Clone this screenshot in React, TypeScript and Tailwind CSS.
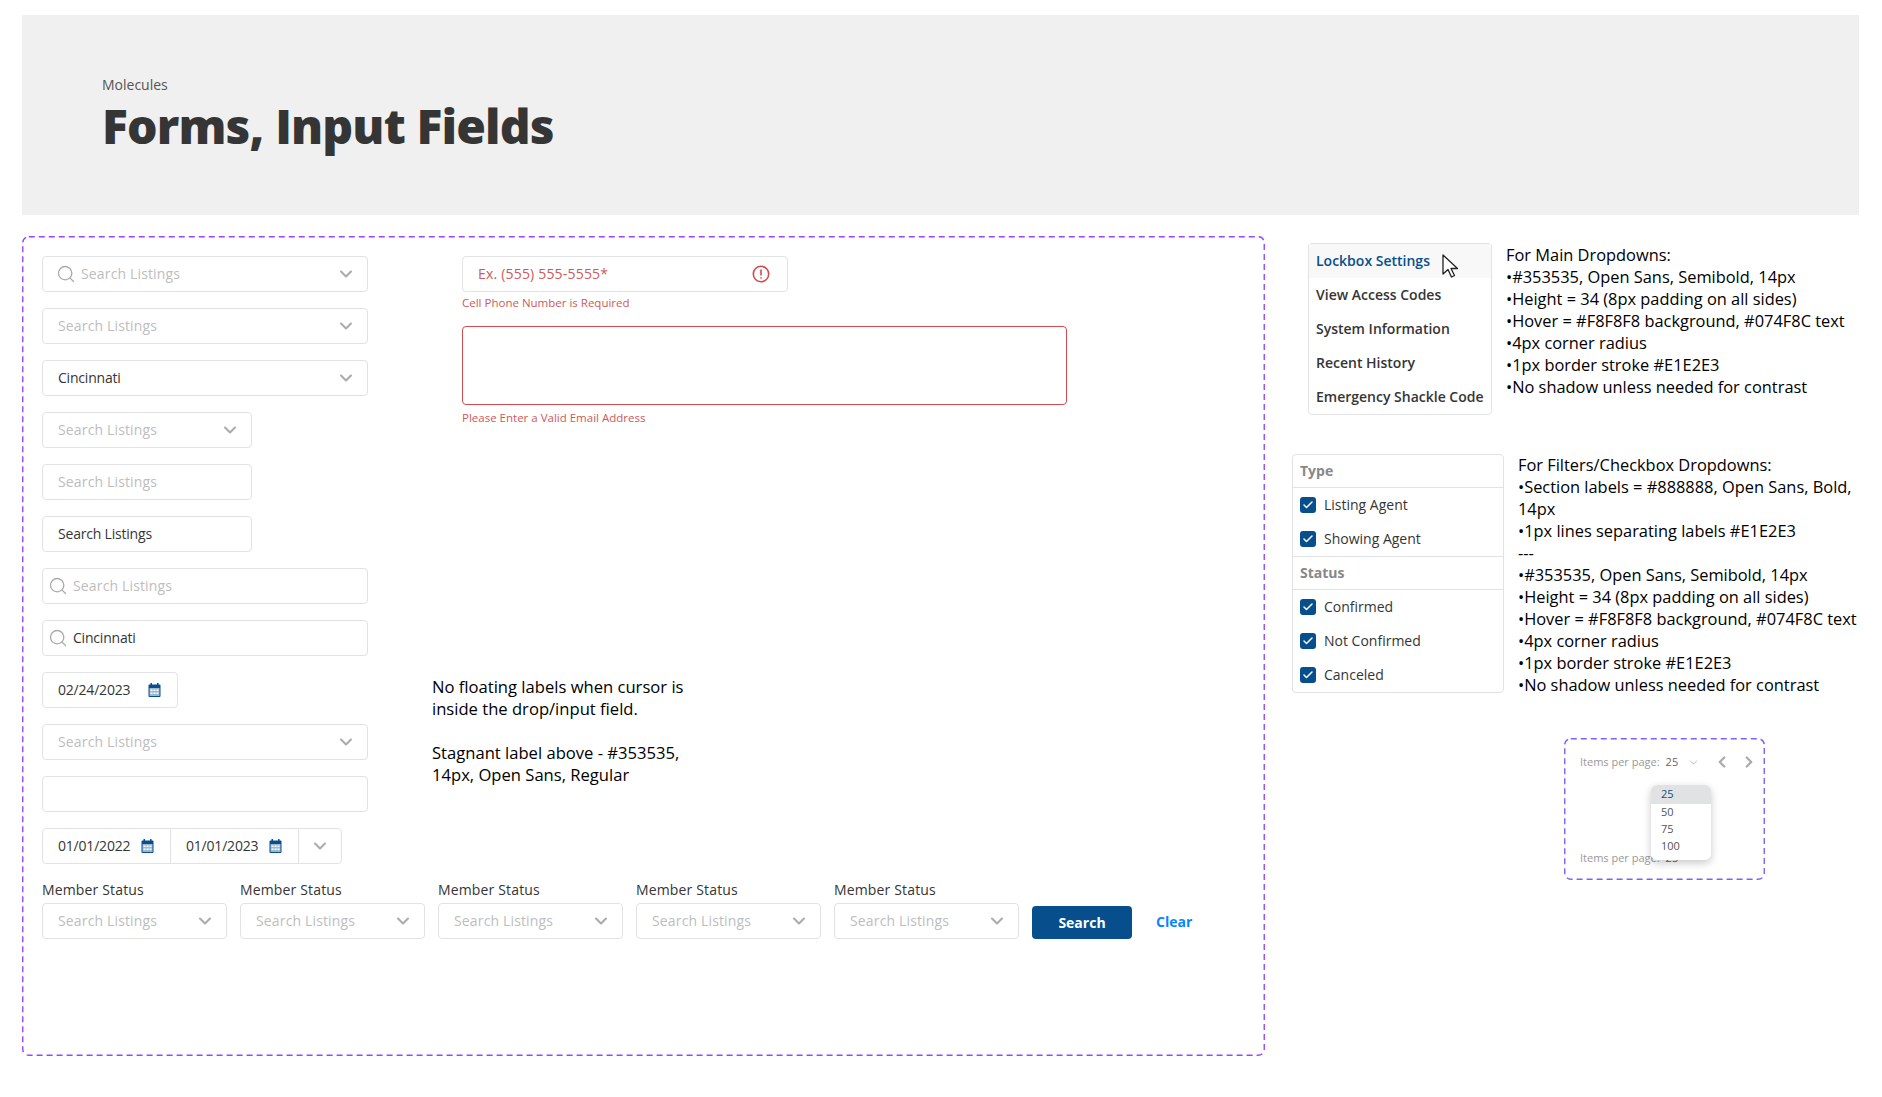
import type { ReactNode } from 'react'
import { ChevronDown, ChevronLeft, ChevronRight, Search, Check } from 'lucide-react'

const font = { fontFamily: '"Open Sans", sans-serif' }

const fieldClass = 'flex h-9 items-center rounded-[4px] border border-[#E1E2E3] bg-white text-sm'

function Chevron({ className = '' }: { className?: string }) {
  return <ChevronDown size={20} strokeWidth={2.5} className={`shrink-0 text-[#ABABAB] ${className}`} />
}

function SearchIcon() {
  return <Search size={20} strokeWidth={1.6} className="shrink-0 text-[#ABABAB]" />
}

// figma style long dashes, css dashed borders come out too short
function DashedFrame({ w, h, color }: { w: number; h: number; color: string }) {
  return (
    <svg width={w} height={h} className="pointer-events-none absolute left-0 top-0" fill="none">
      <rect x="0.75" y="0.75" width={w - 1.5} height={h - 1.5} rx="6" stroke={color} strokeWidth="1.4" strokeDasharray="6 4" />
    </svg>
  )
}

function CalendarIcon() {
  return (
    <svg width="13" height="14" viewBox="0 0 13 14" className="shrink-0">
      <rect x="0.5" y="1.5" width="12" height="12.5" rx="1" fill="#074F8C" />
      <rect x="2.5" y="0" width="1.5" height="3" fill="#074F8C" />
      <rect x="9" y="0" width="1.5" height="3" fill="#074F8C" />
      <rect x="1.5" y="5" width="10" height="8" fill="#9DB9D1" />
      <rect x="2.5" y="6.5" width="2" height="1.5" fill="#fff" />
      <rect x="5.5" y="6.5" width="2" height="1.5" fill="#fff" />
      <rect x="8.5" y="6.5" width="2" height="1.5" fill="#fff" />
      <rect x="2.5" y="9.5" width="2" height="1.5" fill="#fff" />
      <rect x="5.5" y="9.5" width="2" height="1.5" fill="#fff" />
      <rect x="8.5" y="9.5" width="2" height="1.5" fill="#fff" />
    </svg>
  )
}

function Placeholder({ children }: { children: ReactNode }) {
  return <span className="tracking-[0.15px] text-[#BDBDBD]">{children}</span>
}

function Filled({ children }: { children: ReactNode }) {
  return <span className="tracking-[-0.2px] text-[#353535]">{children}</span>
}

function Select({ width, text = 'Search Listings', filled = false }: { width: string; text?: string; filled?: boolean }) {
  return (
    <div className={`${fieldClass} ${width} justify-between pl-[15px] pr-[11px]`}>
      {filled ? <Filled>{text}</Filled> : <Placeholder>{text}</Placeholder>}
      <Chevron />
    </div>
  )
}

function DatePart({ value, gap }: { value: string; gap: string }) {
  return (
    <div className={`flex items-center pl-[15px] ${gap}`}>
      <Filled>{value}</Filled>
      <CalendarIcon />
    </div>
  )
}

function MemberField() {
  return (
    <div className="flex w-[185px] flex-col">
      <span className="mb-[3px] text-sm leading-[20px] tracking-[0.15px] text-[#353535]">Member Status</span>
      <Select width="w-[185px]" />
    </div>
  )
}

function MenuRow({ label, active = false }: { label: string; active?: boolean }) {
  return (
    <div className={`flex h-[34px] items-center px-[7px] text-sm font-semibold ${active ? 'bg-[#F8F8F8] text-[#074F8C]' : 'text-[#353535]'}`}>
      {label}
    </div>
  )
}

function SectionLabel({ label, first = false }: { label: string; first?: boolean }) {
  return (
    <div className={`flex items-center border-b border-[#E1E2E3] px-[7px] text-sm font-bold text-[#888888] ${first ? 'h-[33px]' : 'h-[34px] border-t'}`}>
      {label}
    </div>
  )
}

function CheckRow({ label }: { label: string }) {
  return (
    <div className="flex h-[34px] items-center gap-2 px-[7px] text-sm font-medium text-[#353535]">
      <span className="flex h-4 w-4 items-center justify-center rounded-[3px] bg-[#074F8C]">
        <Check size={12} strokeWidth={3} className="text-white" />
      </span>
      {label}
    </div>
  )
}

function NoteList({ lines }: { lines: string[] }) {
  return (
    <div className="text-[16.4px] font-medium leading-[22px] text-black">
      {lines.map((line, i) => (
        <div key={i}>{line}</div>
      ))}
    </div>
  )
}

export default function App() {
  return (
    <div style={font} className="h-[1097px] w-[1882px] overflow-hidden bg-white pl-[22px] pt-[15px]">
      <header className="flex h-[200px] w-[1837px] flex-col justify-center bg-[#F0F0F0] pl-[80px] pt-[2px]">
        <p className="text-sm leading-5 text-[#555555]">Molecules</p>
        <h1 className="text-[48px] font-extrabold leading-[62px] tracking-[-0.85px] text-[#353535]">Forms, Input Fields</h1>
      </header>

      <div className="mt-[21px] flex items-start">
        {/* Main board */}
        <section className="relative h-[820px] w-[1243px] px-[20px] pt-[20px]">
          <DashedFrame w={1243} h={820} color="#9747FF" />
          <div className="flex">
            <div className="flex w-[327px] flex-col gap-4">
              <div className={`${fieldClass} w-[326px] justify-between pl-[13px] pr-[11px]`}>
                <div className="flex items-center gap-[5px]">
                  <SearchIcon />
                  <Placeholder>Search Listings</Placeholder>
                </div>
                <Chevron />
              </div>
              <Select width="w-[326px]" />
              <Select width="w-[326px]" text="Cincinnati" filled />
              <Select width="w-[210px]" />
              <div className={`${fieldClass} w-[210px] pl-[15px]`}>
                <Placeholder>Search Listings</Placeholder>
              </div>
              <div className={`${fieldClass} w-[210px] pl-[15px]`}>
                <Filled>Search Listings</Filled>
              </div>
              <div className={`${fieldClass} w-[326px] gap-[5px] pl-[5px]`}>
                <SearchIcon />
                <Placeholder>Search Listings</Placeholder>
              </div>
              <div className={`${fieldClass} w-[326px] gap-[5px] pl-[5px]`}>
                <SearchIcon />
                <Filled>Cincinnati</Filled>
              </div>
              <div className={`${fieldClass} w-[136px]`}>
                <DatePart value="02/24/2023" gap="gap-[18px]" />
              </div>
              <Select width="w-[326px]" />
              <div className={`${fieldClass} w-[326px]`} />
              <div className={`${fieldClass} w-[300px]`}>
                <div className="w-[127px] shrink-0">
                  <DatePart value="01/01/2022" gap="gap-[11px]" />
                </div>
                <div className="h-full w-[1px] bg-[#E1E2E3]" />
                <div className="w-[127px] shrink-0">
                  <DatePart value="01/01/2023" gap="gap-[11px]" />
                </div>
                <div className="h-full w-[1px] bg-[#E1E2E3]" />
                <Chevron className="ml-[11px]" />
              </div>
            </div>

            <div className="ml-[63px] flex flex-col">
              <div className="ml-[30px]">
                <div className={`${fieldClass} w-[326px] justify-between pl-[15px] pr-[17px]`}>
                  <span className="tracking-[0.19px] text-[#D0585B]">Ex. (555) 555-5555*</span>
                  <svg width="18" height="18" viewBox="0 0 18 18" fill="none" stroke="#D14B4E" strokeWidth="1.6" strokeLinecap="round">
                    <circle cx="9" cy="9" r="7.7" />
                    <path d="M9 5v5" />
                    <path d="M9 12.8v.2" />
                  </svg>
                </div>
                <p className="mt-[2px] text-[11.5px] leading-[18px] text-[#D0585B]">Cell Phone Number is Required</p>
                <div className="mt-[14px] h-[79px] w-[605px] rounded-[4px] border border-[#D14B4E]" />
                <p className="mt-[4px] text-[11.5px] leading-[18px] text-[#D0585B]">Please Enter a Valid Email Address</p>
              </div>
              <div className="mt-[249px] w-[270px] text-[16.6px] font-medium leading-[22px] text-black">
                <p>No floating labels when cursor is inside the drop/input field.</p>
                <p className="mt-[22px]">Stagnant label above - #353535, 14px, Open Sans, Regular</p>
              </div>
            </div>
          </div>

          <div className="mt-[16px] flex items-end gap-[13px]">
            <MemberField />
            <MemberField />
            <MemberField />
            <MemberField />
            <MemberField />
            <button className="h-[33px] w-[100px] rounded-[4px] bg-[#074F8C] text-sm font-bold text-white">Search</button>
            <button className="mb-[8px] ml-[11px] text-sm font-bold leading-[18px] text-[#0A84FF]">Clear</button>
          </div>
        </section>

        {/* Specs column */}
        <div className="ml-[27px] flex flex-col">
          <div className="ml-[16px] mt-[7px] flex items-start gap-[14px]">
            <div className="relative w-[184px] overflow-hidden rounded-[4px] border border-[#E1E2E3]">
              <MenuRow label="Lockbox Settings" active />
              <MenuRow label="View Access Codes" />
              <MenuRow label="System Information" />
              <MenuRow label="Recent History" />
              <MenuRow label="Emergency Shackle Code" />
              <svg width="17" height="24" viewBox="0 0 17 24" className="absolute left-[133px] top-[10px]">
                <path d="M1 1v19l5-4.5 3.5 7.5 3-1.5-3.5-7h6.5z" fill="#fff" stroke="#222" strokeWidth="1.3" strokeLinejoin="round" />
              </svg>
            </div>
            <div className="pt-[1px]">
              <NoteList
                lines={[
                  'For Main Dropdowns:',
                  '•#353535, Open Sans, Semibold, 14px',
                  '•Height = 34 (8px padding on all sides)',
                  '•Hover = #F8F8F8 background, #074F8C text',
                  '•4px corner radius',
                  '•1px border stroke #E1E2E3',
                  '•No shadow unless needed for contrast',
                ]}
              />
            </div>
          </div>

          <div className="mt-[39px] flex items-start gap-[14px]">
            <div className="w-[212px] overflow-hidden rounded-[4px] border border-[#E1E2E3]">
              <SectionLabel label="Type" first />
              <CheckRow label="Listing Agent" />
              <CheckRow label="Showing Agent" />
              <SectionLabel label="Status" />
              <CheckRow label="Confirmed" />
              <CheckRow label="Not Confirmed" />
              <CheckRow label="Canceled" />
            </div>
            <div className="w-[342px]">
              <NoteList
                lines={[
                  'For Filters/Checkbox Dropdowns:',
                  '•Section labels = #888888, Open Sans, Bold, 14px',
                  '•1px lines separating labels #E1E2E3',
                  '---',
                  '•#353535, Open Sans, Semibold, 14px',
                  '•Height = 34 (8px padding on all sides)',
                  '•Hover = #F8F8F8 background, #074F8C text',
                  '•4px corner radius',
                  '•1px border stroke #E1E2E3',
                  '•No shadow unless needed for contrast',
                ]}
              />
            </div>
          </div>

          {/* Items per page */}
          <div className="relative ml-[272px] mt-[42px] h-[142px] w-[201px] pl-[16px] pt-[14px] text-[11px]">
            <DashedFrame w={201} h={142} color="#7B61FF" />
            <div className="flex h-[20px] items-center">
              <span className="text-[#999999]">Items per page:</span>
              <span className="ml-[6px] text-[#666666]">25</span>
              <ChevronDown size={13} strokeWidth={1.5} className="ml-[9px] text-[#ABABAB]" />
              <ChevronLeft size={18} strokeWidth={3} className="ml-[13px] text-[#ABABAB]" />
              <ChevronRight size={18} strokeWidth={3} className="ml-[9px] text-[#ABABAB]" />
            </div>
            <div className="mt-[76px] flex h-[20px] items-center">
              <span className="text-[#999999]">Items per page:</span>
              <span className="ml-[6px] text-[#666666]">25</span>
            </div>
            <div className="absolute left-[87px] top-[47px] w-[60px] overflow-hidden rounded-[6px] bg-white shadow-[0_3px_8px_rgba(0,0,0,0.22)]">
              <div className="flex h-[19px] items-center bg-[#E1E2E3] pl-[10px] text-[#074F8C]">25</div>
              <div className="flex h-[17px] items-center pl-[10px] text-[#555555]">50</div>
              <div className="flex h-[17px] items-center pl-[10px] text-[#555555]">75</div>
              <div className="flex h-[22px] items-start pl-[10px] text-[#555555]">100</div>
            </div>
          </div>
        </div>
      </div>
    </div>
  )
}
